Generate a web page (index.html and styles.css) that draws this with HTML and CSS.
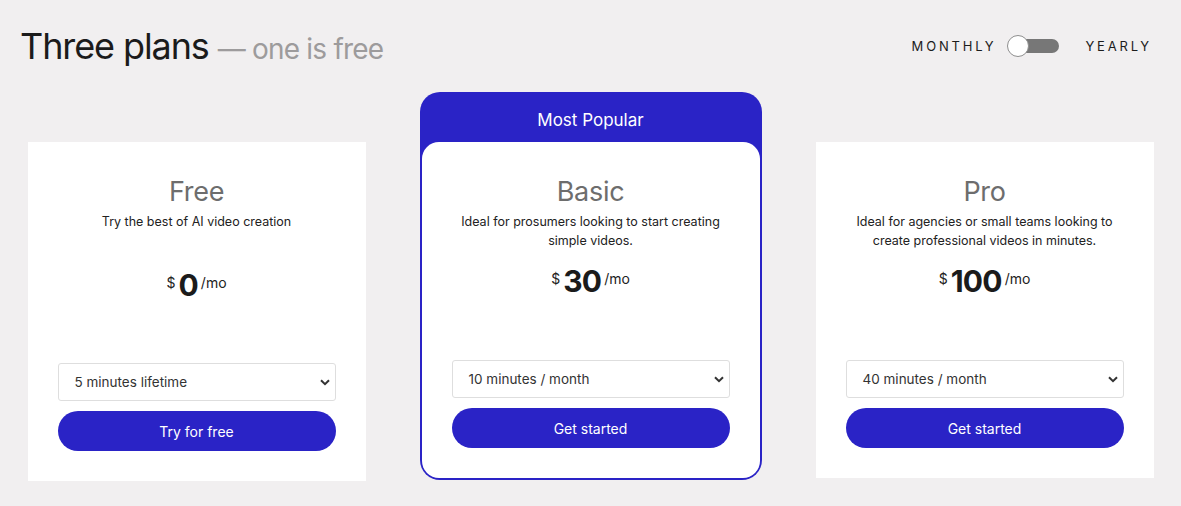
FILE: index.html
```html
<!DOCTYPE html>
<html lang="en">
<head>
<meta charset="utf-8">
<title>Three plans</title>
<link rel="stylesheet" href="styles.css">
</head>
<body>
<div class="page">
  <header class="top">
    <h1 class="title">Three plans <span class="title-sub">— one is free</span></h1>
    <div class="billing">
      <span class="billing-label">MONTHLY</span>
      <span class="switch"><span class="switch-knob"></span></span>
      <span class="billing-label">YEARLY</span>
    </div>
  </header>

  <main class="plans">
    <section class="plan plan-side plan-free">
      <h2 class="plan-name">Free</h2>
      <p class="plan-desc">Try the best of AI video creation</p>
      <div class="price price-free"><span class="price-cur">$</span><span class="price-num">0</span><span class="price-per">/mo</span></div>
      <div class="select"><span>5 minutes lifetime</span><svg class="chev" width="10" height="7" viewBox="0 0 10 7"><path d="M1 1.2 5 5.2 9 1.2" fill="none" stroke="#333" stroke-width="2"/></svg></div>
      <button class="cta">Try for free</button>
    </section>

    <section class="plan-featured">
      <div class="featured-tag">Most Popular</div>
      <div class="plan plan-inner">
        <h2 class="plan-name">Basic</h2>
        <p class="plan-desc">Ideal for prosumers looking to start creating simple videos.</p>
        <div class="price"><span class="price-cur">$</span><span class="price-num">30</span><span class="price-per">/mo</span></div>
        <div class="select"><span>10 minutes / month</span><svg class="chev" width="10" height="7" viewBox="0 0 10 7"><path d="M1 1.2 5 5.2 9 1.2" fill="none" stroke="#333" stroke-width="2"/></svg></div>
        <button class="cta">Get started</button>
      </div>
    </section>

    <section class="plan plan-side">
      <h2 class="plan-name">Pro</h2>
      <p class="plan-desc">Ideal for agencies or small teams looking to create professional videos in minutes.</p>
      <div class="price"><span class="price-cur">$</span><span class="price-num">100</span><span class="price-per">/mo</span></div>
      <div class="select"><span>40 minutes / month</span><svg class="chev" width="10" height="7" viewBox="0 0 10 7"><path d="M1 1.2 5 5.2 9 1.2" fill="none" stroke="#333" stroke-width="2"/></svg></div>
      <button class="cta">Get started</button>
    </section>
  </main>
</div>
</body>
</html>
```
FILE: styles.css
```css
* { box-sizing: border-box; }
html, body { margin: 0; padding: 0; }
body {
  background: #f1eff0;
  font-family: Inter, "Noto Sans", sans-serif;
  color: #1c1c1c;
  width: 1181px;
  height: 506px;
  overflow: hidden;
}
.page { padding-top: 24px; }

.top {
  display: flex;
  align-items: center;
  justify-content: space-between;
  padding: 0 29px 0 20px;
  height: 44px;
}
.title {
  margin: 0;
  font-size: 36px;
  font-weight: 400;
  letter-spacing: -1.1px;
  color: #1b1b1b;
}
.title-sub {
  font-size: 28px;
  color: #9d9b9c;
  letter-spacing: -0.8px;
}
.billing {
  display: flex;
  align-items: center;
}
.billing-label {
  font-size: 13px;
  letter-spacing: 2.8px;
  color: #1c1c1c;
}
.switch {
  position: relative;
  width: 44px;
  height: 14px;
  margin: 0 26px 0 19px;
  background: #777;
  border-radius: 7px;
}
.switch-knob {
  position: absolute;
  left: -8px;
  top: -4px;
  width: 22px;
  height: 22px;
  border-radius: 50%;
  background: #fff;
  border: 1px solid #8f8f8f;
}

.plans {
  display: grid;
  grid-template-columns: 338px 342px 338px;
  column-gap: 54px;
  justify-content: center;
  align-items: start;
  margin-top: 24px;
}
.plan {
  background: #fff;
  display: flex;
  flex-direction: column;
  align-items: center;
  padding: 34px 30px 30px;
  text-align: center;
}
.plan-side { margin-top: 50px; }
.plan-name {
  margin: 0;
  font-size: 27px;
  line-height: 32px;
  font-weight: 400;
  color: #6d6d6d;
  letter-spacing: -0.3px;
}
.plan-desc {
  margin: 4px 0 0;
  font-size: 12.5px;
  line-height: 19px;
  color: #222;
  min-height: 38px;
  max-width: 270px;
}
.price {
  display: flex;
  align-items: center;
  gap: 3px;
  margin-top: 13px;
  height: 36px;
}
.price-free { margin-top: 17px; }
.price-cur { font-size: 14px; margin-top: -6px; color: #222; }
.price-num { font-size: 30px; font-weight: 700; letter-spacing: -0.8px; color: #1b1b1b; }
.price-per { font-size: 14px; margin-top: -6px; color: #222; }

.select {
  align-self: stretch;
  display: flex;
  align-items: center;
  justify-content: space-between;
  height: 38px;
  margin-top: 61px;
  padding: 0 5px 0 16px;
  background: #fff;
  border: 1px solid #dedede;
  border-radius: 3px;
  font-size: 13.5px;
  color: #333;
}
.price-free + .select { margin-top: 60px; }
.chev { display: block; }
.cta {
  align-self: stretch;
  height: 40px;
  margin-top: 10px;
  border: 0;
  border-radius: 20px;
  background: #2a23c6;
  color: #fff;
  font-family: inherit;
  font-size: 14px;
}

.plan-featured {
  background: #2a23c6;
  border-radius: 20px;
  padding: 0 2px 2px;
}
.featured-tag {
  height: 50px;
  display: flex;
  align-items: center;
  justify-content: center;
  color: #fff;
  font-size: 17px;
  padding-top: 5px;
}
.plan-inner {
  border-radius: 17px;
}
```
